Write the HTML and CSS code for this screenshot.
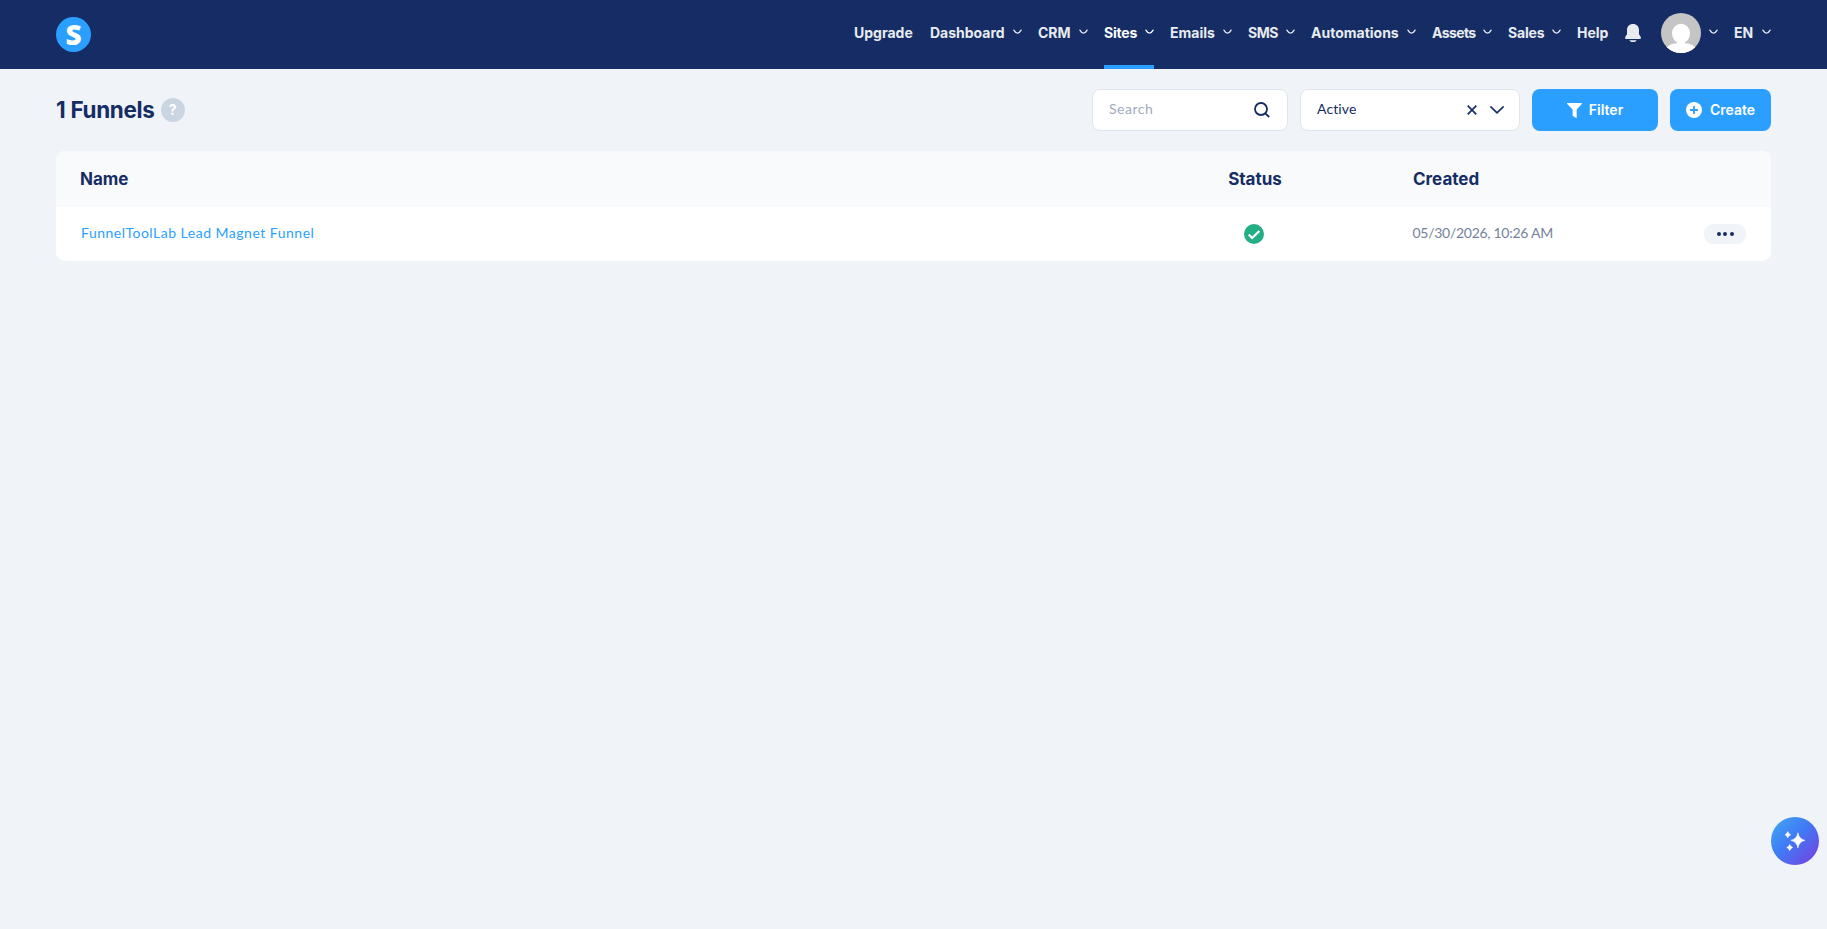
FILE: index.html
```
<!DOCTYPE html>
<html lang="en">
<head>
<meta charset="utf-8">
<title>Funnels</title>
<link rel="stylesheet" href="styles.css">
</head>
<body>
<svg class="defs" aria-hidden="true">
  <symbol id="chev" viewBox="0 0 9 6"><path d="M.9 1.1 Q4.5 7.3 8.1 1.1" fill="none" stroke="currentColor" stroke-width="1.3" stroke-linecap="round"/></symbol>
</svg>
<header class="topbar">
  <a class="logo">S</a>
  <nav class="nav">
    <a class="item w-upgrade">Upgrade</a>
    <a class="item w-dashboard">Dashboard<svg class="chev"><use href="#chev"/></svg></a>
    <a class="item w-crm">CRM<svg class="chev"><use href="#chev"/></svg></a>
    <a class="item w-sites active">Sites<svg class="chev"><use href="#chev"/></svg></a>
    <a class="item w-emails">Emails<svg class="chev"><use href="#chev"/></svg></a>
    <a class="item w-sms">SMS<svg class="chev"><use href="#chev"/></svg></a>
    <a class="item w-automations">Automations<svg class="chev"><use href="#chev"/></svg></a>
    <a class="item w-assets">Assets<svg class="chev"><use href="#chev"/></svg></a>
    <a class="item w-sales">Sales<svg class="chev"><use href="#chev"/></svg></a>
    <a class="item w-help">Help</a>
    <a class="item bell"><svg width="16" height="18" viewBox="0 0 16 18"><path d="M8 0C4.3 0 2 2.6 2 6v4.2L.5 12.6C-.2 14 .2 15 1.2 15h13.6c1 0 1.400-1 .7-2.400L14 10.200V6C14 2.600 11.700 0 8 0z" fill="#e8ebf0"/><path d="M4.300 16.200h7.400Q10.800 18 9.300 18H6.700Q5.200 18 4.300 16.200z" fill="#e8ebf0"/></svg></a>
    <a class="item w-user">
      <svg width="40" height="40" viewBox="0 0 40 40"><defs><clipPath id="av"><circle cx="20" cy="20" r="20"/></clipPath></defs><g clip-path="url(#av)"><path d="M0 0h40v40H0z" fill="#c5c5c5"/><ellipse cx="20" cy="20.500" rx="9" ry="9.800" fill="#fff"/><path d="M16 27h8v3.300c6 .4 9.500 2.500 11 5.700V41H5v-5c1.500-3.200 5-5.300 11-5.700z" fill="#fff"/></g></svg>
      <svg class="chev"><use href="#chev"/></svg>
    </a>
    <a class="item w-lang">EN<svg class="chev"><use href="#chev"/></svg></a>
  </nav>
</header>
<main class="page">
  <div class="toolbar">
    <h1 class="title"><span class="count">1</span>Funnels</h1>
    <span class="help">?</span>
    <div class="controls">
      <div class="field search"><span>Search</span>
        <svg width="16" height="16" viewBox="0 0 16 16" fill="none" stroke="#152d64" stroke-width="1.800"><circle cx="7" cy="7" r="6"/><path d="M11.300 11.300L15.200 15"/></svg>
      </div>
      <div class="field select"><span>Active</span>
        <svg class="clear" width="10" height="10" viewBox="0 0 10 10"><path d="M.7.7l8.600 8.600M9.300.7L.7 9.300" stroke="#152d64" stroke-width="1.700"/></svg>
        <svg width="14" height="8" viewBox="0 0 14 8"><path d="M.9.900L7 6.800 13.100.900" fill="none" stroke="#152d64" stroke-width="1.600" stroke-linecap="round" stroke-linejoin="round"/></svg>
      </div>
      <button class="btn filter"><svg width="15" height="15" viewBox="0 0 15 15"><path d="M.6 0h13.800c.6 0 .8.700.4 1.100L9.700 6.600v7.600c0 .6-.5.900-1 .6l-2.700-1.800c-.3-.2-.4-.4-.4-.8V6.600L.2 1.100C-.2.700 0 0 .6 0z" fill="#fff"/></svg><span>Filter</span></button>
      <button class="btn create"><svg width="16" height="16" viewBox="0 0 16 16"><circle cx="8" cy="8" r="8" fill="#fff"/><path d="M8 4.700v6.600M4.700 8h6.600" stroke="#2b9fff" stroke-width="1.800" stroke-linecap="round"/></svg><span>Create</span></button>
    </div>
  </div>
  <section class="table">
    <div class="row head"><span>Name</span><span class="center status">Status</span><span class="created">Created</span><span></span></div>
    <div class="row body">
      <a class="name">FunnelToolLab Lead Magnet Funnel</a>
      <span class="center"><svg class="check" width="20" height="20" viewBox="0 0 20 20"><circle cx="10" cy="10" r="10" fill="#24ae85"/><path d="M4.700 10.500L8.200 14 15.300 7" fill="none" stroke="#fff" stroke-width="2.300"/></svg></span>
      <span class="date">05/30/2026, 10:26 AM</span>
      <button class="more"><i></i><i></i><i></i></button>
    </div>
  </section>
</main>
<button class="assistant"><svg width="20" height="20" viewBox="0 0 20 20" fill="#fff"><path d="M12.900 1.700q1.200 6.300 7.100 7.600-5.900 1.300-7.100 7.600-1.200-6.300-7.100-7.600 5.900-1.300 7.100-7.600zM2.800 0.500q.7 2.500 3 3.200-2.300.7-3 3.200-.7-2.500-3-3.200 2.300-.7 3-3.200zM4.700 13.300q.7 2.500 3 3.200-2.300.7-3 3.200-.7-2.500-3-3.200 2.300-.7 3-3.200z" stroke="#fff" stroke-width=".5" stroke-linejoin="round"/></svg></button>
</body>
</html>
```

FILE: styles.css
```
* { box-sizing: border-box; }
body {
  margin: 0;
  min-height: 929px;
  background: #f0f4f9;
  color: #152d64;
  font-family: Lato, "Liberation Sans", sans-serif;
  font-size: 14px;
}
button { border: 0; padding: 0; font: inherit; }
svg { display: block; flex: none; }
.defs { position: absolute; width: 0; height: 0; }

.topbar {
  display: flex;
  justify-content: space-between;
  height: 69px;
  padding: 0 56px;
  background: #152d64;
}
.logo {
  display: flex;
  align-items: center;
  justify-content: center;
  width: 35px;
  height: 35px;
  margin-top: 17px;
  border-radius: 50%;
  background: #2b9fff;
  color: #fff;
  font: 800 28px/35px "Open Sans", sans-serif;
}
.nav {
  display: flex;
  gap: 16px;
  height: 69px;
  font: 700 14px/17px Inter, sans-serif;
  color: #e8ebf0;
}
.item {
  display: flex;
  align-items: center;
  justify-content: space-between;
  white-space: nowrap;
  padding-bottom: 1px;
  border-bottom: 4px solid transparent;
}
.item.active { color: #fff; border-color: #2b9fff; }
.chev { width: 9px; height: 6px; }
.w-upgrade { width: 60px; }
.w-dashboard { width: 92px; }
.w-crm { width: 50px; }
.w-sites { width: 50px; letter-spacing: -.2px; }
.w-emails { width: 62px; }
.w-sms { width: 47px; letter-spacing: -.5px; }
.w-automations { width: 105px; }
.w-assets { width: 60px; letter-spacing: -.6px; }
.w-sales { width: 53px; letter-spacing: -.2px; }
.w-help { width: 32px; }
.bell { width: 16px; padding-bottom: 0; }
.w-user { width: 61px; padding-left: 4px; padding-bottom: 0; }
.w-user .chev { margin-bottom: 1px; }
.w-lang { width: 37px; }

.page { padding: 20px 56px 0; }
.toolbar { display: flex; align-items: center; height: 42px; }
.title {
  display: flex;
  align-items: baseline;
  margin: 0;
  padding-bottom: 2px;
  font: 700 22.400px/28px Inter, sans-serif;
  letter-spacing: -.3px;
}
.count { width: 14.500px; padding-top: 1px; }
.help {
  width: 24px;
  height: 24px;
  margin-left: 6px;
  border-radius: 50%;
  background: #cbd5e1;
  color: #fff;
  font: 700 14px/24px Inter, sans-serif;
  text-align: center;
}
.controls { display: flex; gap: 12px; margin-left: auto; }
.field {
  display: flex;
  align-items: center;
  height: 42px;
  border: 1px solid #e0e5ec;
  border-radius: 8px;
  background: #fff;
}
.field span { margin-right: auto; padding-bottom: 3px; }
.search { width: 196px; padding: 0 17px 0 16px; color: #a0aabd; letter-spacing: .5px; }
.select { width: 220px; padding: 0 15px 0 16px; letter-spacing: .1px; }
.clear { margin-right: 13px; }
.btn {
  display: flex;
  align-items: center;
  justify-content: center;
  height: 42px;
  border-radius: 8px;
  background: #2b9fff;
  color: #fff;
  font: 600 14px/17px Inter, sans-serif;
}
.btn span { padding-bottom: 1px; }
.filter { width: 126px; gap: 7px; }
.create { width: 101px; gap: 8px; }

.table { margin-top: 20px; border-radius: 9px; overflow: hidden; background: #fff; }
.row {
  display: grid;
  grid-template-columns: 1100px 148px 1fr 43px;
  align-items: center;
  padding: 0 24px;
}
.head { height: 56px; background: #f9fafc; font: 700 17px/20px Inter, sans-serif; }
.body { height: 54px; }
.center { display: flex; justify-content: center; }
.status { padding-left: 2px; }
.created { padding-left: 85px; }
.name { padding-left: 1px; padding-bottom: 3px; color: #2b9fff; letter-spacing: .5px; }
.date { padding-left: 84.500px; padding-bottom: 3px; color: #74829c; letter-spacing: -.28px; }
.more {
  display: flex;
  align-items: center;
  justify-content: center;
  gap: 2.500px;
  width: 42px;
  height: 20px;
  border-radius: 9px;
  background: #f0f4f9;
}
.more i { width: 4px; height: 4px; border-radius: 50%; background: #152d64; }

.assistant {
  position: absolute;
  left: 1771px;
  top: 817px;
  display: flex;
  align-items: center;
  justify-content: center;
  width: 48px;
  height: 48px;
  border-radius: 50%;
  background: linear-gradient(135deg, #43a5f5 5%, #3f7bf5 45%, #7a3be0 100%);
}
```
